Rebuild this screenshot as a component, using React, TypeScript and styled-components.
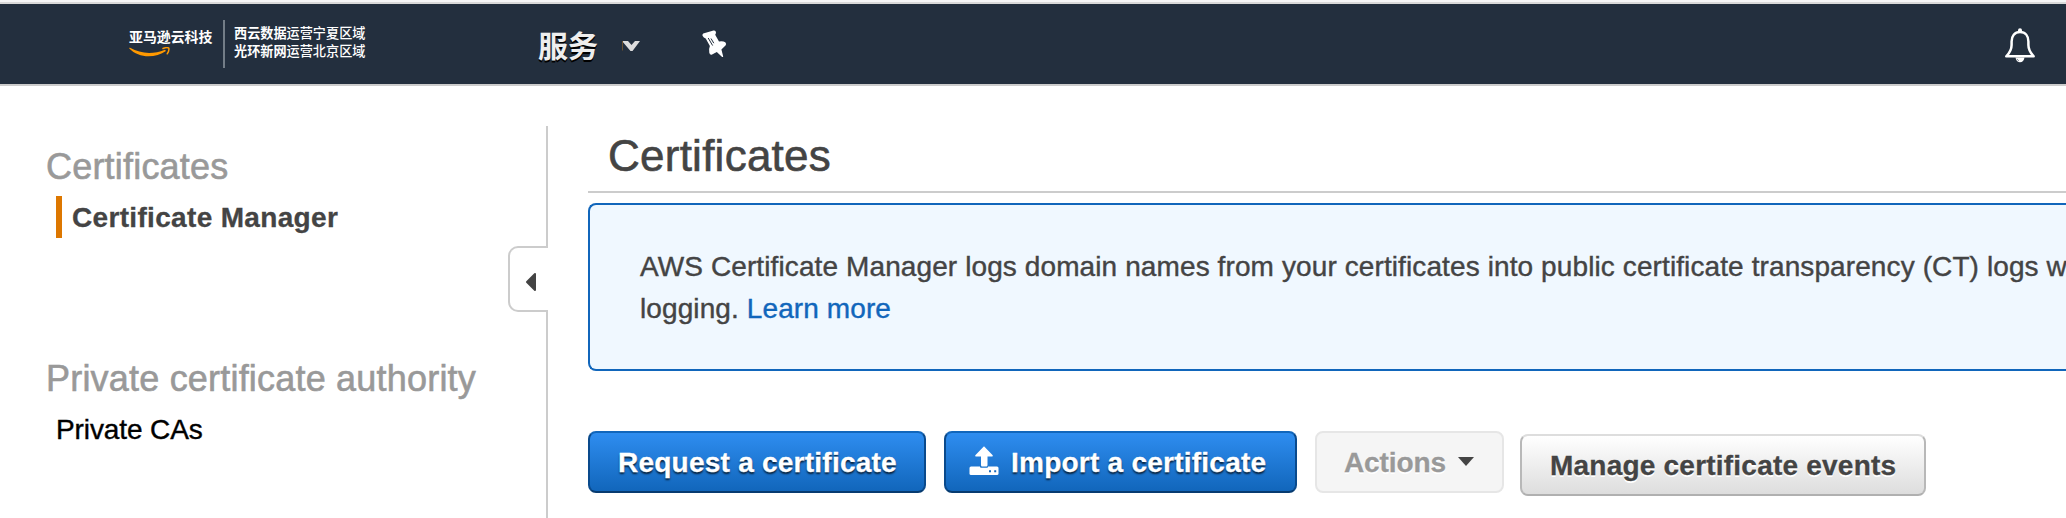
import React from "react";
import styled, { createGlobalStyle, css } from "styled-components";

const GlobalStyle = createGlobalStyle`
  html, body { margin: 0; padding: 0; background: #fff; overflow: hidden; }
  body { font-family: "Liberation Sans", Arial, sans-serif; font-size: 28px; color: #444; }
  *, *::before, *::after { box-sizing: border-box; }
`;

const Page = styled.div`
  display: flex;
  flex-direction: column;
  width: 100%;
  height: 100vh;
  overflow: hidden;
`;

const Header = styled.header`
  display: flex;
  align-items: center;
  flex: none;
  height: 84px;
  padding: 0 30px 0 129px;
  border-top: 2px solid #d9d9d9;
  border-bottom: 2px solid #ccc;
  background: #232f3e;
  color: #fff;
  font-family: "Noto Sans CJK SC", sans-serif;
`;

const TopEdge = styled.div`
  flex: none;
  height: 2px;
  background: #f6f6f6;
`;

const Brand = styled.div`
  display: flex;
  align-items: center;
  height: 48px;
  width: 409px;
`;

const BrandMark = styled.div`
  display: flex;
  flex-direction: column;
  width: 96px;
  height: 100%;
  padding-top: 7px;
  border-right: 2px solid #737d87;
`;

const BrandName = styled.span`
  height: 20px;
  font-size: 13.9px;
  line-height: 18px;
  font-weight: 700;
  white-space: nowrap;
`;

const Operators = styled.div`
  padding: 0 0 5px 9px;
  font-size: 13.15px;
  line-height: 18px;
  font-weight: 500;
  white-space: nowrap;

  b { font-weight: 700; }
`;

const Services = styled.div`
  display: flex;
  align-items: center;
  width: 164px;
  font-size: 30px;
  line-height: 44px;
  font-weight: 700;
  color: #eee;
  text-shadow: 0 2px 0 #000;

  svg { margin: 4px 0 0 23px; }
`;

const PinSlot = styled.div`
  display: flex;
  padding-top: 2px;
`;

const BellSlot = styled.div`
  display: flex;
  margin-left: auto;
  padding-top: 3px;
`;

const Body = styled.div`
  display: flex;
  flex: 1;
  padding-top: 40px;
`;

const Sidebar = styled.aside`
  position: relative;
  flex: none;
  width: 548px;
  padding: 21px 0 0 45px;
  border-right: 2px solid #ccc;
`;

const NavGroup = styled.section`
  & + & { margin-top: 121px; }
`;

const NavHeading = styled.h2`
  margin: 0 0 9px 1px;
  font-size: 36px;
  line-height: 40px;
  font-weight: 400;
  letter-spacing: 0.2px;
  color: #999;
  -webkit-text-stroke: 0.6px;
`;

const NavItem = styled.div<{ $active?: boolean }>`
  height: 42px;
  margin-left: 11px;
  padding-top: 1px;
  line-height: 42px;
  ${({ $active }) =>
    $active
      ? css`
          padding-left: 10px;
          border-left: 6px solid #dd7700;
          font-weight: 700;
          letter-spacing: 0.33px;
          color: #444;
          -webkit-text-stroke: 0.3px;
        `
      : css`
          letter-spacing: -0.1px;
          color: #000;
          -webkit-text-stroke: 0.4px;
        `}
`;

const CollapseTab = styled.div`
  position: absolute;
  top: 120px;
  right: -2px;
  display: flex;
  align-items: center;
  width: 40px;
  height: 66px;
  padding: 6px 0 0 15px;
  border: 2px solid #ccc;
  border-right: 0;
  border-radius: 10px 0 0 10px;
  background: #fff;
`;

const Main = styled.main`
  flex: 1;
  min-width: 0;
  padding: 5px 0 0 40px;
`;

const Title = styled.h1`
  height: 62px;
  margin: 0 0 10px;
  padding-left: 20px;
  border-bottom: 2px solid #ccc;
  font-size: 44px;
  line-height: 50px;
  font-weight: 400;
  letter-spacing: 0.25px;
  -webkit-text-stroke: 0.6px;
`;

const Notice = styled.div`
  height: 168px;
  margin-bottom: 60px;
  padding: 41px 0 0 50px;
  border: 2px solid #1166bb;
  border-right: 0;
  border-radius: 8px 0 0 8px;
  background: #f0f8ff;
  line-height: 42px;
  letter-spacing: 0.105px;
  white-space: nowrap;
  -webkit-text-stroke: 0.4px;
`;

const Link = styled.a`
  color: #1166bb;
`;

const Toolbar = styled.div`
  display: flex;
  align-items: flex-start;
`;

type Variant = "primary" | "disabled" | "normal";

const variants = {
  primary: css`
    border-color: #1166bb #0a4a8c #073b70;
    background: linear-gradient(#2e8df0, #1166bb);
    letter-spacing: 0.24px;
    color: #fff;
    text-shadow: 0 2px 2px rgba(0, 0, 0, 0.75);
  `,
  disabled: css`
    border-color: #e6e6e6;
    background: #f5f5f5;
    letter-spacing: -0.1px;
    color: #999;
    text-shadow: 0 2px 0 #fff;
  `,
  normal: css`
    margin-top: 3px;
    border-color: #ddd #b8b8b8 #b0b0b0;
    background: linear-gradient(#fff, #ddd);
    letter-spacing: 0.22px;
    color: #444;
    text-shadow: 0 2px 0 #fff;
  `,
};

const Button = styled.button<{ $variant: Variant; $width: number; $gap: number; $pad: number }>`
  display: flex;
  align-items: center;
  flex: none;
  width: ${({ $width }) => $width}px;
  height: 62px;
  margin: 0 ${({ $gap }) => $gap}px 0 0;
  padding: 1px 0 0 ${({ $pad }) => $pad}px;
  border: 2px solid;
  border-radius: 8px;
  font: 700 28px/42px "Liberation Sans", Arial, sans-serif;
  white-space: nowrap;
  -webkit-text-stroke: 0.3px;
  ${({ $variant }) => variants[$variant]}

  svg { flex: none; }
`;

const UploadIcon = styled.svg`
  margin: -4px 12px 0 0;
`;

const MenuCaret = styled.svg`
  margin: -2px 0 0 12px;
`;

const Smile = () => (
  <svg width="42" height="14" viewBox="0 0 42 14" fill="none">
    <path d="M.3 1.500C0 .9 .5 .5 1 .8C12 7 24 7.500 36 2.700L37 3.900C26 11.600 9.500 11.200 .3 1.500Z" fill="#ff9900" />
    <path d="M34 1.500C36.500 .6 39 .5 39.800 1.100C40.200 2.500 39.500 4.800 38.200 6.800" stroke="#ff9900" strokeWidth="1.500" strokeLinecap="round" />
  </svg>
);

const ChevronDown = () => (
  <svg width="20" height="12" viewBox="0 0 20 12">
    <path d="M1 1H7L10.500 5L14 1H19L11.500 11H9.500Z" fill="#ddd" />
    <path d="M1.500 1V10.500" stroke="#6a5130" strokeWidth="1" />
  </svg>
);

const Pin = () => (
  <svg width="26" height="30" viewBox="0 0 26 30">
    <path
      d="M1.200 3.400L11.500 .6Q13.800 .2 14 2.600Q13.900 4.200 13.200 4.800L17 11.500Q21 10.800 23.300 12.300Q24.900 14 23.500 15.600L19.400 19.600L21.200 26.400Q20.600 27.800 19.600 26.400L14.800 22L9.600 24.800Q7.700 25 7.300 22.800Q6.600 18.800 7.900 16L3.700 8.600Q1.600 8 .5 5.800Q.2 4 1.200 3.400Z"
      fill="#fff"
    />
    <path d="M6.200 8L10.600 15.500M9 8.500L11.800 13.200" stroke="#232f3e" strokeWidth="1" />
  </svg>
);

const Bell = () => (
  <svg width="32" height="36" viewBox="0 0 32 36">
    <circle cx="16" cy="2.300" r="2" fill="#fff" />
    <path
      d="M16 4C10.500 4 7.600 8.200 7.600 13.500V17C7.600 22 5.500 25 2.300 28.300H29.700C26.500 25 24.400 22 24.400 17V13.500C24.400 8.200 21.500 4 16 4Z"
      fill="none"
      stroke="#fff"
      strokeWidth="2.500"
      strokeLinejoin="round"
    />
    <path d="M11.500 29.500H20.500C20 32.500 18.500 34.300 16 34.300S12 32.500 11.500 29.500Z" fill="#fff" />
    <path d="M13 30.800Q13.500 32.300 15 33" stroke="#66707b" strokeWidth=".8" fill="none" />
  </svg>
);

const Upload = () => (
  <UploadIcon width="30" height="30" viewBox="0 0 30 30">
    <path d="M2 20.500H28Q29.500 20.500 29.500 22V27.500Q29.500 29 28 29H2Q.5 29 .5 27.500V22Q.5 20.500 2 20.500Z" fill="#fff" />
    <path d="M11 19V20.500Q11 21.800 12 21.800H18Q19 21.800 19 20.500V19Z" fill="#1b74cb" />
    <path d="M15 .3L23.700 9.200Q24.200 10.500 23 10.500H18.500V19Q18.500 20.500 17.500 20.500H13Q12 20.500 12 19V10.500H7Q5.800 10.500 6.300 9.200Z" fill="#fff" />
    <path d="M20 24.200h2v2h-2zM25.200 24.200h2v2h-2z" fill="#1769bd" />
  </UploadIcon>
);

export default function App() {
  return (
    <Page>
      <GlobalStyle />
      <TopEdge />
      <Header>
        <Brand>
          <BrandMark>
            <BrandName>亚马逊云科技</BrandName>
            <Smile />
          </BrandMark>
          <Operators>
            <div><b>西云数据</b>运营宁夏区域</div>
            <div><b>光环新网</b>运营北京区域</div>
          </Operators>
        </Brand>
        <Services>
          服务
          <ChevronDown />
        </Services>
        <PinSlot>
          <Pin />
        </PinSlot>
        <BellSlot>
          <Bell />
        </BellSlot>
      </Header>
      <Body>
        <Sidebar>
          <NavGroup>
            <NavHeading>Certificates</NavHeading>
            <NavItem $active>Certificate Manager</NavItem>
          </NavGroup>
          <NavGroup>
            <NavHeading>Private certificate authority</NavHeading>
            <NavItem>Private CAs</NavItem>
          </NavGroup>
          <CollapseTab>
            <svg width="12" height="20" viewBox="0 0 12 20">
              <path d="M10 2V18L2 10Z" fill="#444" stroke="#444" strokeWidth="2" strokeLinejoin="round" />
            </svg>
          </CollapseTab>
        </Sidebar>
        <Main>
          <Title>Certificates</Title>
          <Notice>
            AWS Certificate Manager logs domain names from your certificates into public certificate transparency (CT) logs w
            <br />
            logging. <Link>Learn more</Link>
          </Notice>
          <Toolbar>
            <Button $variant="primary" $width={338} $gap={18} $pad={28}>Request a certificate</Button>
            <Button $variant="primary" $width={353} $gap={18} $pad={23}>
              <Upload />
              Import a certificate
            </Button>
            <Button $variant="disabled" $width={189} $gap={16} $pad={27}>
              Actions
              <MenuCaret width="16" height="9" viewBox="0 0 16 9">
                <path d="M0 0H16L8 9Z" fill="#444" />
              </MenuCaret>
            </Button>
            <Button $variant="normal" $width={406} $gap={0} $pad={28}>Manage certificate events</Button>
          </Toolbar>
        </Main>
      </Body>
    </Page>
  );
}
